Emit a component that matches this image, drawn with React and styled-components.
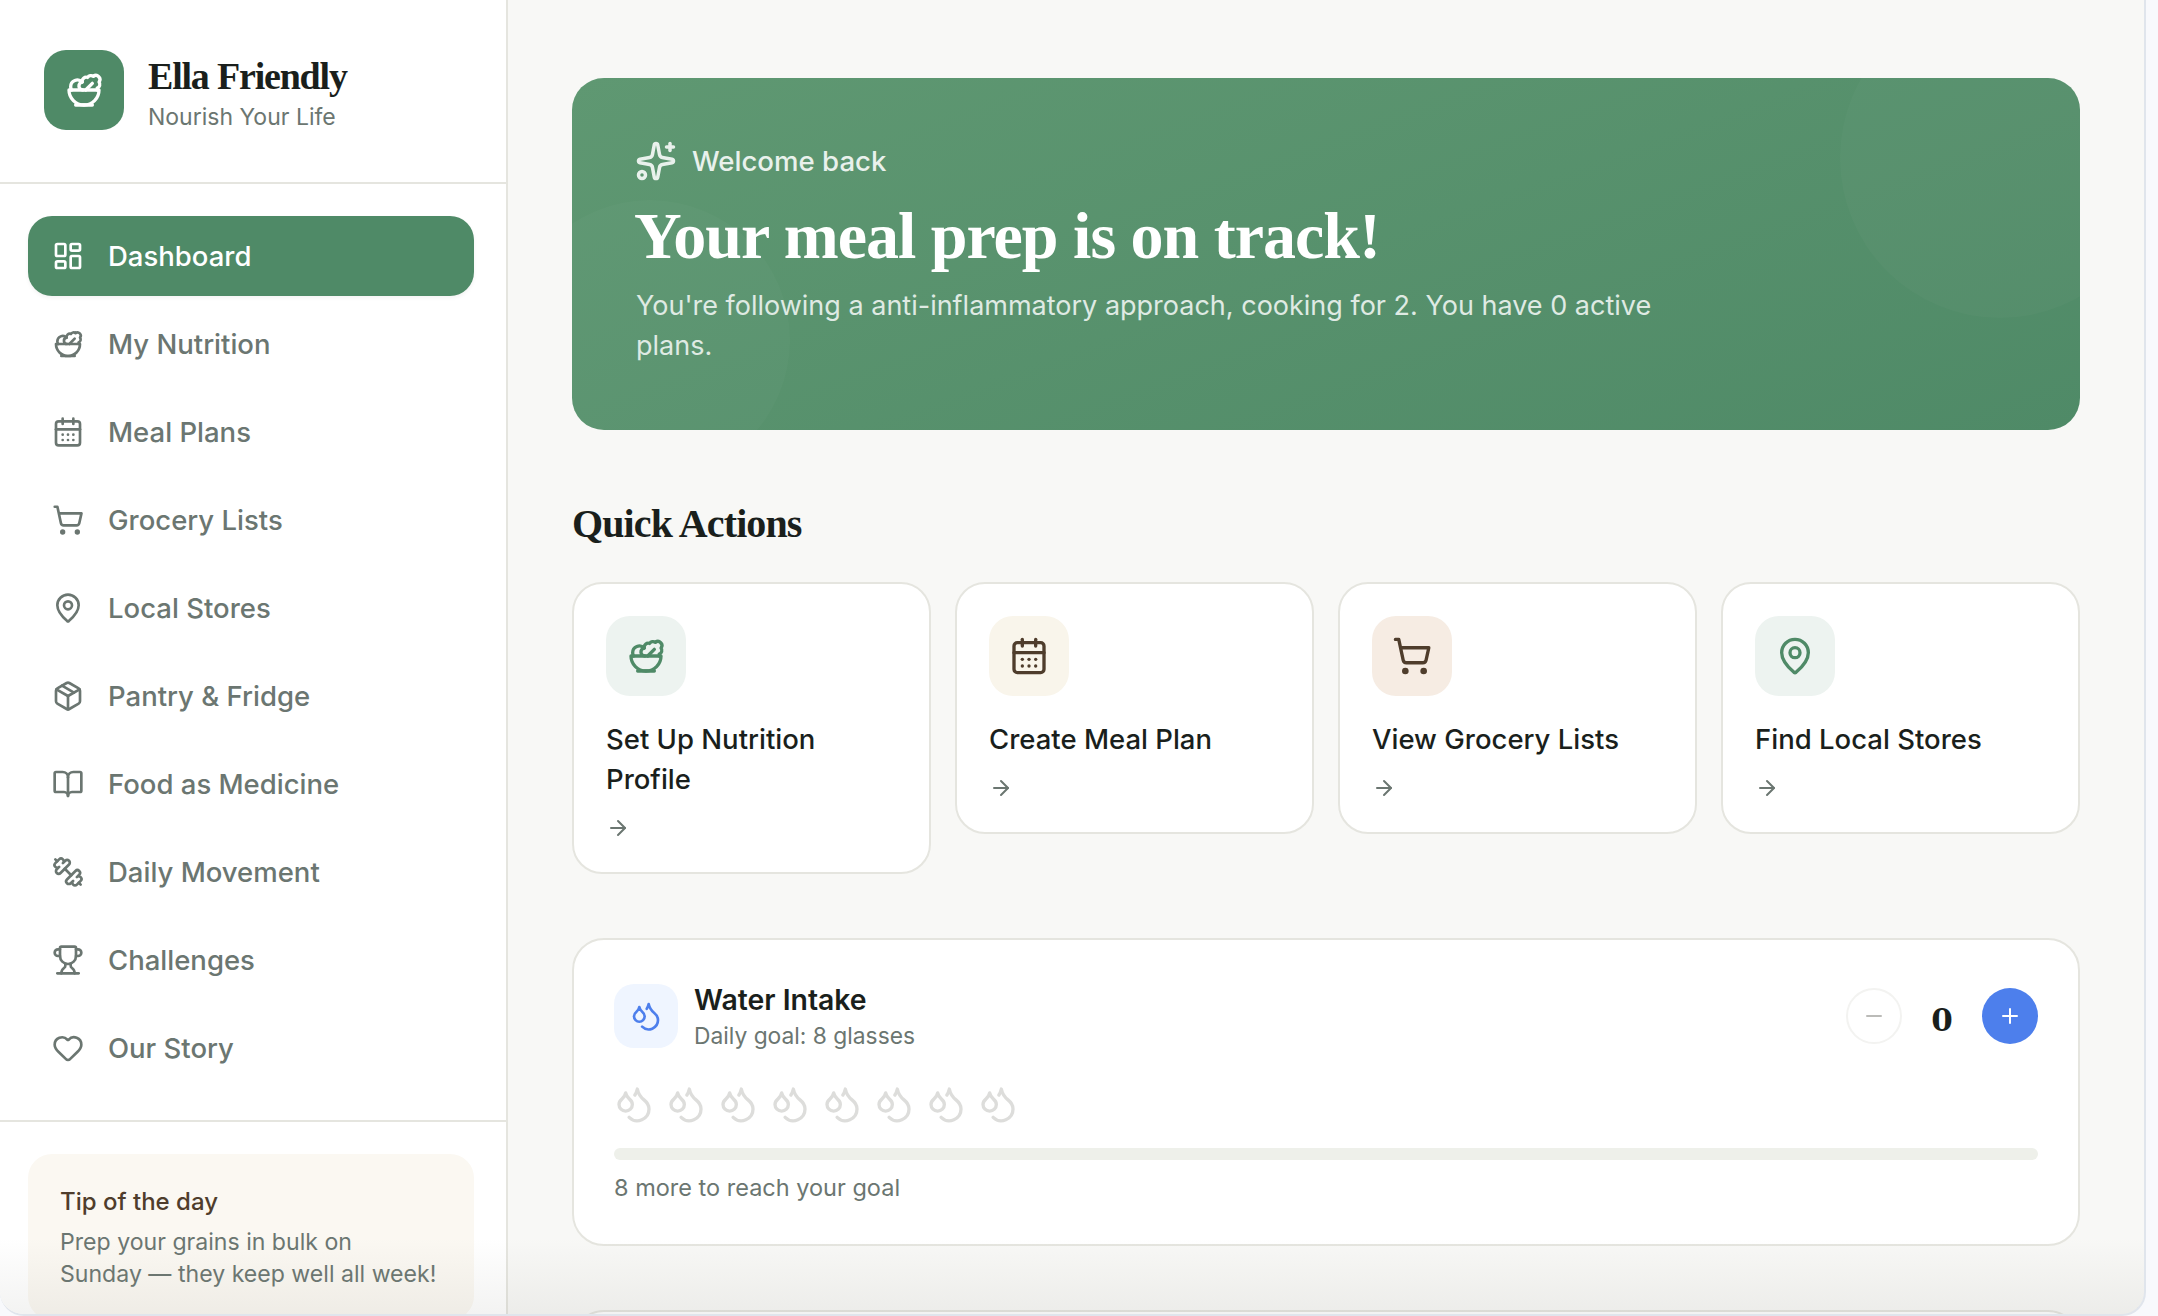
import React from "react";
import styled, { createGlobalStyle } from "styled-components";
import {
  ArrowRight,
  BookOpen,
  CalendarDays,
  Droplets,
  Dumbbell,
  Heart,
  LayoutDashboard,
  MapPin,
  Minus,
  Package,
  Plus,
  Salad,
  ShoppingCart,
  Sparkles,
  Trophy,
} from "lucide-react";

const sans = `Inter, "Noto Sans", sans-serif`;
const serif = `"Liberation Serif", serif`;

// the reference's dumbbell leans the other way
const MirroredDumbbell = styled(Dumbbell)`
  transform: scaleX(-1);
`;

const navItems = [
  { label: "Dashboard", icon: LayoutDashboard, active: true },
  { label: "My Nutrition", icon: Salad },
  { label: "Meal Plans", icon: CalendarDays },
  { label: "Grocery Lists", icon: ShoppingCart },
  { label: "Local Stores", icon: MapPin },
  { label: "Pantry & Fridge", icon: Package },
  { label: "Food as Medicine", icon: BookOpen },
  { label: "Daily Movement", icon: MirroredDumbbell },
  { label: "Challenges", icon: Trophy },
  { label: "Our Story", icon: Heart },
];

const actions = [
  { label: "Set Up Nutrition Profile", icon: Salad, bg: "#edf3f0", color: "#4f8a67" },
  { label: "Create Meal Plan", icon: CalendarDays, bg: "#f9f5eb", color: "#4f3d2c" },
  { label: "View Grocery Lists", icon: ShoppingCart, bg: "#f6ece3", color: "#4f3d2c" },
  { label: "Find Local Stores", icon: MapPin, bg: "#edf3f0", color: "#4f8a67" },
];

const GlobalStyle = createGlobalStyle`
  html, body {
    margin: 0;
    height: 100%;
    background: #f8f9fc;
    overflow: hidden;
  }
  * { box-sizing: border-box; }
`;

const Screen = styled.div`
  width: 2158px;
  height: 1316px;
  padding-right: 12px;
  font-family: ${sans};
`;

const Window = styled.div`
  position: relative;
  display: flex;
  height: 100%;
  overflow: hidden;
  background: #f8f8f6;
  border-right: 2px solid #e0e5ec;
  border-bottom: 2px solid #e0e5ec;
  border-radius: 0 0 24px 24px;
`;

const BottomFade = styled.div`
  position: absolute;
  left: 0;
  right: 0;
  bottom: 0;
  height: 76px;
  background: linear-gradient(to bottom, rgba(120, 120, 110, 0), rgba(120, 120, 110, 0.09));
  pointer-events: none;
`;

const Sidebar = styled.aside`
  flex: 0 0 508px;
  display: flex;
  flex-direction: column;
  overflow: hidden;
  background: #fff;
  border-right: 2px solid #e5e5df;
`;

const Brand = styled.div`
  flex: none;
  display: flex;
  align-items: center;
  gap: 24px;
  height: 184px;
  padding: 0 44px 2px;
  border-bottom: 2px solid #e5e5df;
`;

const Logo = styled.div`
  display: flex;
  align-items: center;
  justify-content: center;
  width: 80px;
  height: 80px;
  border-radius: 22px;
  background: #4f8a67;
  color: #fff;
`;

const BrandText = styled.div`
  padding-top: 6px;
`;

const BrandName = styled.div`
  font-family: ${serif};
  font-weight: 700;
  font-size: 38px;
  line-height: 46px;
  letter-spacing: -1.2px;
  color: #1a1f1c;
`;

const BrandTag = styled.div`
  margin-top: 2px;
  font-size: 23px;
  line-height: 32px;
  color: #6b7671;
`;

const Nav = styled.nav`
  flex: none;
  display: flex;
  flex-direction: column;
  gap: 8px;
  padding: 32px 32px 32px 28px;
  border-bottom: 2px solid #e5e5df;
`;

const NavItem = styled.a`
  display: flex;
  align-items: center;
  gap: 24px;
  height: 80px;
  padding: 0 24px;
  border-radius: 24px;
  font-size: 27.5px;
  font-weight: 500;
  color: ${(p) => (p.$active ? "#fff" : "#6b7671")};
  background: ${(p) => (p.$active ? "#4f8a67" : "transparent")};
  box-shadow: ${(p) => (p.$active ? "0 2px 4px rgba(0, 0, 0, 0.05)" : "none")};
`;

const TipWrap = styled.div`
  flex: none;
  padding: 32px 32px 0 28px;
`;

const Tip = styled.div`
  padding: 31px 32px 30px;
  border-radius: 24px;
  background: #fbf8f2;
`;

const TipTitle = styled.div`
  font-size: 24px;
  font-weight: 500;
  line-height: 34px;
  color: #4f3d2c;
`;

const TipBody = styled.div`
  margin-top: 7px;
  font-size: 23.1px;
  line-height: 32px;
  white-space: nowrap;
  color: #6b7671;
`;

const Main = styled.main`
  flex: 1;
  min-width: 0;
  padding: 78px 64px 0;
`;

const Hero = styled.section`
  position: relative;
  overflow: hidden;
  height: 352px;
  padding: 59px 64px 0 62px;
  border-radius: 32px;
  color: #fff;
  background: linear-gradient(160deg, #5f9872, #4f8a67);
`;

const HeroCircle = styled.span`
  position: absolute;
  width: ${(p) => p.$size}px;
  height: ${(p) => p.$size}px;
  border-radius: 50%;
  background: rgba(255, 255, 255, 0.022);
`;

const TopCircle = styled(HeroCircle)`
  top: -80px;
  right: -80px;
`;

const BottomCircle = styled(HeroCircle)`
  bottom: -50px;
  left: -62px;
`;

const Eyebrow = styled.div`
  position: relative;
  display: flex;
  align-items: center;
  gap: 15px;
  height: 48px;
  padding-left: 1px;
  font-size: 27.6px;
  font-weight: 500;
  color: #e9f1ec;
`;

const HeroTitle = styled.h1`
  position: relative;
  margin: 15px 0 0;
  font-family: ${serif};
  font-weight: 700;
  font-size: 66px;
  line-height: 72px;
  letter-spacing: -1px;
`;

const HeroText = styled.p`
  position: relative;
  max-width: 1040px;
  margin: 14px 0 0 2px;
  font-size: 27px;
  line-height: 40px;
  color: #dfeae3;
`;

const SectionTitle = styled.h2`
  margin: 69px 0 0;
  font-family: ${serif};
  font-weight: 700;
  font-size: 40px;
  line-height: 50px;
  letter-spacing: -0.9px;
  color: #1a1f1c;
`;

const ActionGrid = styled.div`
  display: grid;
  grid-template-columns: repeat(4, 1fr);
  align-items: start;
  gap: 24px;
  margin-top: 33px;
`;

const ActionCard = styled.a`
  display: block;
  padding: 32px;
  border: 2px solid #e5e5df;
  border-radius: 30px;
  background: #fff;
  color: #1a1f1c;
`;

const ActionIcon = styled.div`
  display: flex;
  align-items: center;
  justify-content: center;
  width: 80px;
  height: 80px;
  border-radius: 24px;
  background: ${(p) => p.$bg};
  color: ${(p) => p.$color};
`;

const ActionLabel = styled.div`
  margin-top: 23px;
  font-size: 27.5px;
  font-weight: 500;
  line-height: 40px;
`;

const ActionArrow = styled(ArrowRight)`
  display: block;
  margin-top: 17px;
  color: #6b7671;
`;

const Card = styled.section`
  margin-top: 64px;
  padding: 40px;
  border: 2px solid #e5e5df;
  border-radius: 32px;
  background: #fff;
`;

const WaterHead = styled.div`
  display: flex;
  align-items: center;
  gap: 16px;
  height: 72px;
`;

const WaterIcon = styled.div`
  display: flex;
  align-items: center;
  justify-content: center;
  width: 64px;
  height: 64px;
  border-radius: 20px;
  background: #eff5ff;
  color: #4d7fec;
`;

const WaterInfo = styled.div`
  flex: 1;
`;

const WaterTitle = styled.div`
  font-size: 28.4px;
  font-weight: 600;
  line-height: 40px;
  color: #1a1f1c;
`;

const WaterSub = styled.div`
  font-size: 22.8px;
  line-height: 32px;
  color: #6b7671;
`;

const Controls = styled.div`
  display: flex;
  align-items: center;
  gap: 16px;
`;

const RoundButton = styled.button`
  display: flex;
  align-items: center;
  justify-content: center;
  width: 56px;
  height: 56px;
  padding: 0;
  border-radius: 50%;
  border: ${(p) => (p.$primary ? "none" : "2px solid #f3f3f1")};
  background: ${(p) => (p.$primary ? "#4d7fec" : "#fff")};
  color: ${(p) => (p.$primary ? "#fff" : "#bbbbb8")};
`;

const Count = styled.div`
  width: 48px;
  padding-top: 8px;
  text-align: center;
  font-family: "DejaVu Serif", serif;
  font-weight: 700;
  font-size: 31px;
  line-height: 40px;
  color: #1a1f1c;
`;

const Drops = styled.div`
  display: flex;
  gap: 12px;
  margin-top: 32px;
  color: #dddddb;
`;

const Progress = styled.div`
  height: 12px;
  margin-top: 24px;
  border-radius: 6px;
  background: #eef0ea;
`;

const ProgressNote = styled.div`
  margin-top: 12px;
  font-size: 23.5px;
  line-height: 32px;
  color: #6b7671;
`;

export default function App() {
  return (
    <Screen>
      <GlobalStyle />
      <Window>
        <Sidebar>
          <Brand>
            <Logo>
              <Salad size={40} />
            </Logo>
            <BrandText>
              <BrandName>Ella Friendly</BrandName>
              <BrandTag>Nourish Your Life</BrandTag>
            </BrandText>
          </Brand>
          <Nav>
            {navItems.map(({ label, icon: Icon, active }) => (
              <NavItem key={label} $active={active}>
                <Icon size={32} />
                {label}
              </NavItem>
            ))}
          </Nav>
          <TipWrap>
            <Tip>
              <TipTitle>Tip of the day</TipTitle>
              <TipBody>
                Prep your grains in bulk on
                <br />
                Sunday — they keep well all week!
              </TipBody>
            </Tip>
          </TipWrap>
        </Sidebar>
        <Main>
          <Hero>
            <TopCircle $size={320} />
            <BottomCircle $size={280} />
            <Eyebrow>
              <Sparkles size={42} />
              Welcome back
            </Eyebrow>
            <HeroTitle>Your meal prep is on track!</HeroTitle>
            <HeroText>
              You're following a anti-inflammatory approach, cooking for 2. You have 0 active plans.
            </HeroText>
          </Hero>
          <SectionTitle>Quick Actions</SectionTitle>
          <ActionGrid>
            {actions.map(({ label, icon: Icon, bg, color }) => (
              <ActionCard key={label}>
                <ActionIcon $bg={bg} $color={color}>
                  <Icon size={40} />
                </ActionIcon>
                <ActionLabel>{label}</ActionLabel>
                <ActionArrow size={24} />
              </ActionCard>
            ))}
          </ActionGrid>
          <Card>
            <WaterHead>
              <WaterIcon>
                <Droplets size={32} />
              </WaterIcon>
              <WaterInfo>
                <WaterTitle>Water Intake</WaterTitle>
                <WaterSub>Daily goal: 8 glasses</WaterSub>
              </WaterInfo>
              <Controls>
                <RoundButton>
                  <Minus size={24} />
                </RoundButton>
                <Count>0</Count>
                <RoundButton $primary>
                  <Plus size={24} />
                </RoundButton>
              </Controls>
            </WaterHead>
            <Drops>
              {Array.from({ length: 8 }, (_, i) => (
                <Droplets key={i} size={40} />
              ))}
            </Drops>
            <Progress />
            <ProgressNote>8 more to reach your goal</ProgressNote>
          </Card>
          <Card />
        </Main>
        <BottomFade />
      </Window>
    </Screen>
  );
}
